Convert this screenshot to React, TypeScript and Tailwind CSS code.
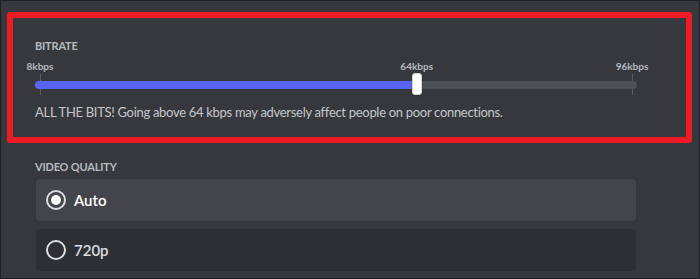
const marks = [
  { label: "8kbps", pos: 5 },
  { label: "64kbps", pos: 381.7 },
  { label: "96kbps", pos: 597 },
];

const BitrateSlider = () => {
  const value = 381.7;
  return (
    <div className="relative w-[602px] h-[36px]">
      {marks.map((m) => (
        <div key={m.label}>
          <span
            className="absolute top-0 -translate-x-1/2 text-[10px] leading-[12px] font-bold text-[#b5bac1] whitespace-nowrap"
            style={{ left: m.pos }}
          >
            {m.label}
          </span>
          <div
            className="absolute top-[14px] h-[21px] w-px bg-[#5a5c64]"
            style={{ left: m.pos }}
          />
        </div>
      ))}
      <div className="absolute left-0 right-0 top-[21px] h-[8px] rounded-full bg-[#4e5058]" />
      <div
        className="absolute left-0 top-[21px] h-[8px] rounded-l-full bg-[#5865f2]"
        style={{ width: value }}
      />
      <div
        className="absolute top-[13px] h-[22px] w-[10px] -translate-x-1/2 rounded-[3px] bg-white border border-[#d4d6da] shadow"
        style={{ left: value }}
      />
    </div>
  );
};

const Radio = ({ checked }: { checked: boolean }) => (
  <div className="w-[20px] h-[20px] rounded-full border-2 border-[#dbdee1] flex items-center justify-center">
    {checked && <div className="w-[10px] h-[10px] rounded-full bg-white" />}
  </div>
);

export default function App() {
  return (
    <div
      className="w-[700px] h-[279px] overflow-hidden border border-[#1e1f22] bg-[#37383d] text-[#b5bac1]"
      style={{ fontFamily: 'Lato, "Liberation Sans", Arial, sans-serif' }}
    >
      <div className="ml-[6px] mt-[11px] w-[685px] h-[131px] border-[6px] border-[#ed1c24] rounded-[3px] pl-[22px] pt-[20px]">
        <h3 className="text-[11px] leading-[16px] font-bold tracking-[-0.2px] uppercase text-[#b5bac1]">
          Bitrate
        </h3>
        <div className="mt-[6px]">
          <BitrateSlider />
        </div>
        <p className="mt-[7px] text-[13px] leading-[18px] tracking-[-0.3px] text-[#c4c7cc]">
          ALL THE BITS! Going above 64 kbps may adversely affect people on poor
          connections.
        </p>
      </div>
      <div className="pl-[34px] pt-[16px] w-[635px]">
        <h3 className="text-[11px] leading-[16px] font-bold tracking-[-0.2px] uppercase text-[#b5bac1]">
          Video Quality
        </h3>
        <div className="mt-[4px] flex flex-col gap-[8px] w-[600px] ml-[1px]">
          <div className="h-[42px] rounded-[4px] bg-[#44454c] flex items-center gap-[8px] pl-[10px]">
            <Radio checked />
            <span className="text-[15px] font-semibold text-white">Auto</span>
          </div>
          <div className="h-[42px] rounded-[4px] bg-[#2e2f34] flex items-center gap-[8px] pl-[10px]">
            <Radio checked={false} />
            <span className="text-[15px] font-semibold text-[#dbdee1]">720p</span>
          </div>
        </div>
      </div>
    </div>
  );
}
